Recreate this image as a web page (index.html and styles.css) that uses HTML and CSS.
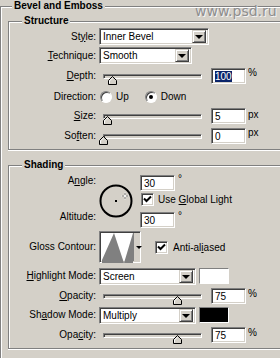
FILE: index.html
```html
<!DOCTYPE html>
<html lang="en">
<head>
    <meta charset="UTF-8">
    <meta name="viewport" content="width=device-width, initial-scale=1.0">
    <title>Bevel and Emboss</title>
    <link rel="stylesheet" href="styles.css">
</head>
<body>
    <div class="dialog">
        <div class="watermark">www.psd.ru</div>

        <fieldset class="group outer">
            <legend class="legend-main">Bevel and Emboss</legend>

            <!-- Structure -->
            <fieldset class="group structure">
                <legend class="legend-sub">Structure</legend>

                <div class="row h19">
                    <span class="label">St<u>y</u>le:</span>
                    <div class="select w-style"><span>Inner Bevel</span><i class="drop"></i></div>
                </div>

                <div class="row h19">
                    <span class="label"><u>T</u>echnique:</span>
                    <div class="select w-tech"><span>Smooth</span><i class="drop"></i></div>
                </div>

                <div class="row h21">
                    <span class="label"><u>D</u>epth:</span>
                    <div class="slider">
                        <div class="track"></div>
                        <svg class="thumb" style="left: 9px" width="9" height="9" viewBox="0 0 9 9"><path d="M0.5 8.5V4.5L4.5 0.5L8.5 4.5V8.5Z" fill="#d4d0c8" stroke="#000"/><path d="M1.5 7.5V4.9L4.5 1.9" fill="none" stroke="#fff"/></svg>
                    </div>
                    <div class="field"><span class="selected">100</span></div>
                    <span class="unit">%</span>
                </div>

                <div class="row h21">
                    <span class="label">Direction:</span>
                    <span class="radio"></span><span class="radio-text">Up</span>
                    <span class="radio checked down"></span><span class="radio-text">Down</span>
                </div>

                <div class="row h18">
                    <span class="label"><u>S</u>ize:</span>
                    <div class="slider">
                        <div class="track"></div>
                        <svg class="thumb" style="left: 4px" width="9" height="9" viewBox="0 0 9 9"><path d="M0.5 8.5V4.5L4.5 0.5L8.5 4.5V8.5Z" fill="#d4d0c8" stroke="#000"/><path d="M1.5 7.5V4.9L4.5 1.9" fill="none" stroke="#fff"/></svg>
                    </div>
                    <div class="field">5</div>
                    <span class="unit">px</span>
                </div>

                <div class="row h21">
                    <span class="label">So<u>f</u>ten:</span>
                    <div class="slider">
                        <div class="track"></div>
                        <svg class="thumb" style="left: 0px" width="9" height="9" viewBox="0 0 9 9"><path d="M0.5 8.5V4.5L4.5 0.5L8.5 4.5V8.5Z" fill="#d4d0c8" stroke="#000"/><path d="M1.5 7.5V4.9L4.5 1.9" fill="none" stroke="#fff"/></svg>
                    </div>
                    <div class="field">0</div>
                    <span class="unit">px</span>
                </div>
            </fieldset>

            <!-- Shading -->
            <fieldset class="group shading">
                <legend class="legend-sub">Shading</legend>

                <div class="angle-block">
                    <div class="angle-labels">
                        <span class="label">A<u>n</u>gle:</span>
                        <span class="label altitude">Altitude:</span>
                    </div>
                    <svg class="dial" width="34" height="34" viewBox="0 0 34 34">
                        <circle cx="17" cy="17" r="15.5" fill="none" stroke="#000" stroke-width="2"/>
                        <rect x="16" y="16" width="2" height="2" fill="#000"/>
                        <path d="M26 8.5v7M22.5 12h7" stroke="#fff" stroke-width="1"/>
                        <path d="M26 9.5v1M26 13.5v1M23.5 12h1M27.5 12h1" stroke="#000" stroke-width="1"/>
                    </svg>
                    <div class="angle-fields">
                        <div class="field-line">
                            <div class="field">30</div><span class="deg">°</span>
                        </div>
                        <div class="check-line">
                            <span class="checkbox"><svg width="9" height="9" viewBox="0 0 9 9"><path d="M1 3.5l2.5 2.5l4.5-4.5" fill="none" stroke="#000" stroke-width="2"/></svg></span>
                            <span>Use <u>G</u>lobal Light</span>
                        </div>
                        <div class="field-line">
                            <div class="field">30</div><span class="deg">°</span>
                        </div>
                    </div>
                </div>

                <div class="row contour-row">
                    <span class="label">Gloss Contour:</span>
                    <div class="contour">
                        <svg class="contour-preview" width="31" height="30" viewBox="0 0 31 30">
                            <path d="M0 30V27L12 0L22 30L31 0V30Z" fill="#808080"/>
                        </svg>
                        <i class="contour-drop"></i>
                    </div>
                    <span class="checkbox aa"><svg width="9" height="9" viewBox="0 0 9 9"><path d="M1 3.5l2.5 2.5l4.5-4.5" fill="none" stroke="#000" stroke-width="2"/></svg></span>
                    <span>Anti-al<u>i</u>ased</span>
                </div>

                <div class="row h20 mode-first">
                    <span class="label"><u>H</u>ighlight Mode:</span>
                    <div class="select w-mode"><span>Screen</span><i class="drop"></i></div>
                    <span class="swatch white"></span>
                </div>

                <div class="row h19">
                    <span class="label"><u>O</u>pacity:</span>
                    <div class="slider">
                        <div class="track"></div>
                        <svg class="thumb" style="left: 74px" width="9" height="9" viewBox="0 0 9 9"><path d="M0.5 8.5V4.5L4.5 0.5L8.5 4.5V8.5Z" fill="#d4d0c8" stroke="#000"/><path d="M1.5 7.5V4.9L4.5 1.9" fill="none" stroke="#fff"/></svg>
                    </div>
                    <div class="field">75</div>
                    <span class="unit">%</span>
                </div>

                <div class="row h20">
                    <span class="label">Sh<u>a</u>dow Mode:</span>
                    <div class="select w-mode"><span>Multiply</span><i class="drop"></i></div>
                    <span class="swatch black"></span>
                </div>

                <div class="row h19">
                    <span class="label">Opa<u>c</u>ity:</span>
                    <div class="slider">
                        <div class="track"></div>
                        <svg class="thumb" style="left: 74px" width="9" height="9" viewBox="0 0 9 9"><path d="M0.5 8.5V4.5L4.5 0.5L8.5 4.5V8.5Z" fill="#d4d0c8" stroke="#000"/><path d="M1.5 7.5V4.9L4.5 1.9" fill="none" stroke="#fff"/></svg>
                    </div>
                    <div class="field">75</div>
                    <span class="unit">%</span>
                </div>
            </fieldset>
        </fieldset>
    </div>
</body>
</html>
```

FILE: styles.css
```css
body {
    margin: 0;
    background-color: #d4d0c8;
    font-family: "Liberation Sans", Arial, sans-serif;
    font-size: 10px;
    color: #000;
    overflow: hidden;
}

u {
    text-decoration: underline;
    text-underline-offset: 1px;
}

.dialog {
    position: relative;
    width: 280px;
    height: 358px;
    overflow: hidden;
}

.watermark {
    position: absolute;
    left: 195px;
    top: 3px;
    font-family: "DejaVu Sans", sans-serif;
    font-size: 14px;
    color: #8e8e8e;
    text-shadow: 1px 1px 0 #f4f4f4;
    z-index: 2;
}

/* group boxes drawn like the classic etched frame */
.group {
    margin: 0;
    padding: 0;
    min-width: 0;
    border: 1px solid #808080;
    border-right: none;
    box-shadow: inset 1px 1px 0 #fff, 0 1px 0 #fff;
}

.group legend {
    font-weight: bold;
    line-height: 12px;
    padding: 0 2px;
    background-color: #d4d0c8;
}

.outer {
    padding: 3px 0 0 7px;
    height: 380px;
}

.legend-main {
    margin-left: 4px;
}

.legend-sub {
    margin-left: 13px;
}

.structure {
    padding-bottom: 3px;
}

.shading {
    margin-top: 9px;
    padding-bottom: 4px;
}

.row {
    display: flex;
    align-items: center;
    height: 20px;
}

.h18 { height: 18px; }
.h19 { height: 19px; }
.h20 { height: 20px; }
.h21 { height: 21px; }

.label {
    width: 87px;
    margin-right: 3px;
    text-align: right;
    line-height: 12px;
    flex-shrink: 0;
}

/* sunken edit look */
.select,
.field,
.contour {
    box-sizing: border-box;
    background-color: #fff;
    border: 1px solid;
    border-color: #808080 #fff #fff #808080;
    box-shadow: inset 1px 1px 0 #404040, inset -1px -1px 0 #d4d0c8;
}

.select {
    display: flex;
    align-items: center;
    height: 17px;
    padding: 2px 2px 2px 3px;
}

.select span {
    flex: 1;
}

.w-style { width: 110px; }
.w-tech { width: 93px; }
.w-mode { width: 97px; }

.drop {
    position: relative;
    box-sizing: border-box;
    width: 14px;
    height: 13px;
    background-color: #d4d0c8;
    border: 1px solid;
    border-color: #d4d0c8 #404040 #404040 #d4d0c8;
    box-shadow: inset 1px 1px 0 #fff, inset -1px -1px 0 #808080;
}

.drop::after {
    content: "";
    position: absolute;
    left: 2px;
    top: 4px;
    border-left: 4px solid transparent;
    border-right: 4px solid transparent;
    border-top: 4px solid #000;
}

.slider {
    position: relative;
    width: 112px;
    height: 16px;
    flex-shrink: 0;
}

.track {
    box-sizing: border-box;
    margin: 6px 0 0 4px;
    width: 99px;
    height: 5px;
    background-color: #d4d0c8;
    border: 1px solid;
    border-color: #808080 #fff #fff #808080;
    box-shadow: inset 1px 1px 0 #404040;
}

.thumb {
    position: absolute;
    top: 8px;
}

.field {
    width: 35px;
    height: 16px;
    padding: 2px 0 0 3px;
    line-height: 11px;
    flex-shrink: 0;
}

.selected {
    background-color: #0a246a;
    color: #fff;
}

.unit {
    margin-left: 2px;
    align-self: flex-start;
    margin-top: 2px;
}

.radio {
    box-sizing: border-box;
    width: 12px;
    height: 12px;
    margin-left: 1px;
    border-radius: 50%;
    background-color: #fff;
    border: 1px solid;
    border-color: #808080 #fff #fff #808080;
    box-shadow: inset 1px 1px 0 #404040;
    display: flex;
    align-items: center;
    justify-content: center;
}

.radio.checked::after {
    content: "";
    width: 4px;
    height: 4px;
    border-radius: 50%;
    background-color: #000;
}

.radio.down {
    margin-left: 16px;
}

.radio-text {
    margin-left: 4px;
}

/* angle, dial and altitude */
.angle-block {
    display: flex;
    padding-top: 4px;
}

.angle-labels {
    display: flex;
    flex-direction: column;
}

.altitude {
    margin-top: 24px;
}

.dial {
    margin-top: 9px;
    flex-shrink: 0;
}

.angle-fields {
    margin-left: 7px;
}

.field-line {
    display: flex;
}

.deg {
    margin-left: 3px;
    line-height: 8px;
}

.check-line {
    display: flex;
    align-items: center;
    gap: 4px;
    margin: 2px 0 6px 1px;
    height: 13px;
}

.checkbox {
    box-sizing: border-box;
    width: 13px;
    height: 13px;
    background-color: #fff;
    border: 1px solid;
    border-color: #808080 #fff #fff #808080;
    box-shadow: inset 1px 1px 0 #404040, inset -1px -1px 0 #d4d0c8;
    display: flex;
    align-items: center;
    justify-content: center;
    flex-shrink: 0;
}

.contour-row {
    height: 32px;
    margin-top: 3px;
}

.contour {
    display: flex;
    width: 42px;
    height: 32px;
    padding: 1px;
}

.contour-preview {
    display: block;
    margin: 0 0 0 1px;
}

.contour-drop {
    position: relative;
    flex: 1;
    background-color: #d4d0c8;
    border-left: 1px solid #808080;
}

.contour-drop::after {
    content: "";
    position: absolute;
    left: 2px;
    top: 13px;
    border-left: 3px solid transparent;
    border-right: 3px solid transparent;
    border-top: 3px solid #000;
}

.aa {
    margin: 0 5px 0 14px;
}

.mode-first {
    margin-top: 3px;
}

.swatch {
    box-sizing: border-box;
    width: 30px;
    height: 16px;
    margin-left: 3px;
    border: 1px solid;
    border-color: #808080 #fff #fff #808080;
}

.swatch.white {
    background-color: #fff;
}

.swatch.black {
    background-color: #000;
}
```
